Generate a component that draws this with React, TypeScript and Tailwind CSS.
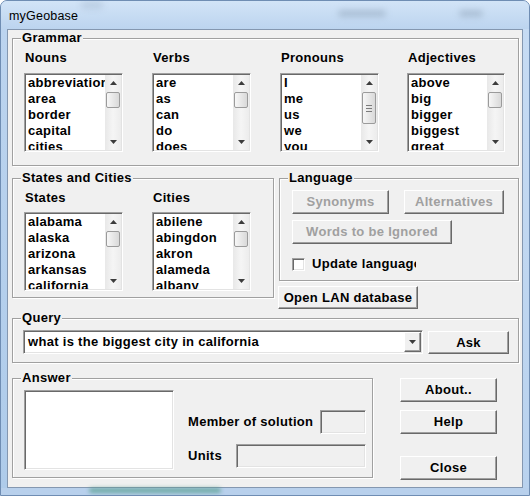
import type { ReactNode } from 'react';

const nouns = ['abbreviation', 'area', 'border', 'capital', 'cities'];
const verbs = ['are', 'as', 'can', 'do', 'does'];
const pronouns = ['I', 'me', 'us', 'we', 'you'];
const adjectives = ['above', 'big', 'bigger', 'biggest', 'great'];
const states = ['alabama', 'alaska', 'arizona', 'arkansas', 'california'];
const cities = ['abilene', 'abingdon', 'akron', 'alameda', 'albany'];

const raised =
  'border border-t-white border-l-white border-b-[#696969] border-r-[#696969] shadow-[inset_-1px_-1px_0_#a0a0a0] bg-[#f0f0f0]';
const sunken =
  'border border-t-[#a0a0a0] border-l-[#a0a0a0] border-b-white border-r-white shadow-[inset_1px_1px_0_#696969,inset_-1px_-1px_0_#e3e3e3] p-[1px]';

function Arrow({ down }: { down?: boolean }) {
  return (
    <svg width="7" height="4" viewBox="0 0 7 4">
      <polygon points={down ? '0,0 7,0 3.5,4' : '0,4 7,4 3.5,0'} fill="#3c3c3c" />
    </svg>
  );
}

function ScrollBar({ big }: { big?: boolean }) {
  return (
    <div className="flex h-full w-[16px] shrink-0 flex-col bg-linear-to-r from-[#e8e8e8] via-[#f5f5f5] to-[#ececec]">
      <div className="flex h-[16px] items-center justify-center">
        <Arrow />
      </div>
      <div className="flex-1 pt-[1px]">
        {big ? (
          <div className="mx-[1px] flex h-[32px] flex-col items-center justify-center gap-[2px] rounded-[2px] border border-[#9b9b9b] bg-linear-to-r from-[#f7f7f7] to-[#d9d9d9]">
            <div className="h-[1px] w-[6px] bg-[#7c7c7c]" />
            <div className="h-[1px] w-[6px] bg-[#7c7c7c]" />
            <div className="h-[1px] w-[6px] bg-[#7c7c7c]" />
          </div>
        ) : (
          <div className="mx-[1px] h-[16px] rounded-[2px] border border-[#9b9b9b] bg-linear-to-r from-[#f7f7f7] to-[#d9d9d9]" />
        )}
      </div>
      <div className="flex h-[16px] items-center justify-center">
        <Arrow down />
      </div>
    </div>
  );
}

function ListBox({ items, big, wide }: { items: string[]; big?: boolean; wide?: boolean }) {
  return (
    <div className={`${sunken} flex h-[79px] bg-white ${wide ? 'w-[99px]' : 'w-[98px]'}`}>
      <div className="flex-1 overflow-hidden whitespace-nowrap pl-[2px]">
        {items.map((it) => (
          <div key={it} className="h-[16px] leading-[16px]">
            {it}
          </div>
        ))}
      </div>
      <ScrollBar big={big} />
    </div>
  );
}

function Group({ title, className, children }: { title: string; className: string; children: ReactNode }) {
  return (
    <div className={`border border-[#a0a0a0] shadow-[1px_1px_0_#fff,inset_1px_1px_0_#fff] ${className}`}>
      <div className="-mt-[9px] ml-[8px] h-[16px] w-fit bg-[#f0f0f0] px-[1px] leading-[16px]">{title}</div>
      {children}
    </div>
  );
}

function Button({ label, className, disabled }: { label: string; className: string; disabled?: boolean }) {
  return (
    <div
      className={`${raised} flex items-center justify-center ${disabled ? 'text-[#a0a0a0]' : 'text-black'} ${className}`}
    >
      {label}
    </div>
  );
}

function Column({ label, children, className }: { label: string; children: ReactNode; className: string }) {
  return (
    <div className={`flex flex-col ${className}`}>
      <div className="h-[16px] pl-[1px] leading-[16px]">{label}</div>
      {children}
    </div>
  );
}

export default function App() {
  return (
    <div className="flex h-[496px] w-[530px] flex-col overflow-hidden rounded-t-[7px] border border-[#6f8db3] bg-[#bad2ee] font-['Liberation_Sans',Arial,sans-serif] text-[13px] font-bold tracking-[0.3px] text-black">
      {/* title bar */}
      <div className="relative flex h-[28px] shrink-0 items-center bg-linear-to-b from-[#d2e4f7] to-[#bcd4ef] pl-[8px] pt-[2px]">
        <span className="text-[12.5px] font-normal tracking-[0.2px]">myGeobase</span>
        <div className="absolute left-[80px] top-[0px] h-[8px] w-[22px] rounded-full bg-[#9fb3c9] opacity-40 blur-[3px]" />
        <div className="absolute left-[337px] top-[9px] h-[7px] w-[48px] rounded-full bg-[#8ea2b8] opacity-50 blur-[3px]" />
        <div className="absolute left-[458px] top-[9px] h-[7px] w-[24px] rounded-full bg-[#8ea2b8] opacity-50 blur-[3px]" />
      </div>

      <div className="flex">
        <div className="w-[6px] bg-linear-to-b from-[#bcd4ef] to-[#aecbea]" />
        {/* client area */}
        <div className="flex h-[459px] w-[516px] flex-col border border-[#8497b0] bg-[#f0f0f0] pl-[4px] pt-[8px]">
          <Group title="Grammar" className="h-[128px] w-[507px]">
            <div className="mt-[4px] grid grid-cols-[128px_128px_127px_auto] pl-[11px]">
              <Column label="Nouns" className="gap-[7px]">
                <ListBox items={nouns} wide />
              </Column>
              <Column label="Verbs" className="gap-[7px]">
                <ListBox items={verbs} wide />
              </Column>
              <Column label="Pronouns" className="gap-[7px]">
                <ListBox items={pronouns} big wide />
              </Column>
              <Column label="Adjectives" className="gap-[7px]">
                <ListBox items={adjectives} />
              </Column>
            </div>
          </Group>

          <div className="mt-[12px] flex h-[131px]">
            <Group title="States and Cities" className="h-[120px] w-[262px]">
              <div className="mt-[4px] grid grid-cols-[128px_auto] pl-[11px]">
                <Column label="States" className="gap-[6px]">
                  <ListBox items={states} wide />
                </Column>
                <Column label="Cities" className="gap-[6px]">
                  <ListBox items={cities} wide />
                </Column>
              </div>
            </Group>

            <div className="ml-[5px] flex flex-col">
              <Group title="Language" className="h-[103px] w-[240px]">
                <div className="mt-[4px] flex flex-col pl-[12px]">
                  <div className="flex gap-[15px]">
                    <Button label="Synonyms" disabled className="h-[24px] w-[97px]" />
                    <Button label="Alternatives" disabled className="h-[24px] w-[100px]" />
                  </div>
                  <Button label="Words to be Ignored" disabled className="mt-[6px] h-[24px] w-[160px]" />
                  <div className="mt-[12px] flex h-[16px] items-center">
                    <div className={`${sunken} h-[13px] w-[13px] bg-white`} />
                    <span className="ml-[7px] w-[104px] overflow-hidden whitespace-nowrap leading-[16px]">
                      Update language
                    </span>
                  </div>
                </div>
              </Group>
              <Button label="Open LAN database" className="-ml-[1px] mt-[5px] h-[23px] w-[140px]" />
            </div>
          </div>

          <Group title="Query" className="mt-[9px] h-[45px] w-[507px]">
            <div className="mt-[4px] flex items-start pl-[10px]">
              <div className={`${sunken} flex h-[24px] w-[400px] bg-white`}>
                <div className="flex-1 overflow-hidden whitespace-nowrap pl-[3px] leading-[20px]">
                  what is the biggest city in california
                </div>
                <div className={`${raised} flex h-[20px] w-[17px] items-center justify-center`}>
                  <Arrow down />
                </div>
              </div>
              <Button label="Ask" className="ml-[5px] mt-[1px] h-[23px] w-[81px]" />
            </div>
          </Group>

          <div className="mt-[15px] flex">
            <Group title="Answer" className="h-[100px] w-[361px]">
              <div className="mt-[4px] flex pl-[11px]">
                <div className={`${sunken} h-[80px] w-[150px] bg-white`} />
                <div className="ml-[14px] flex w-[178px] flex-col">
                  <div className="mt-[20px] flex h-[24px] items-center justify-between">
                    <span>Member of solution</span>
                    <div className={`${sunken} h-[24px] w-[46px] bg-[#f0f0f0]`} />
                  </div>
                  <div className="mt-[10px] flex h-[24px] items-center justify-between">
                    <span>Units</span>
                    <div className={`${sunken} h-[24px] w-[130px] bg-[#f0f0f0]`} />
                  </div>
                </div>
              </div>
            </Group>
            <div className="ml-[27px] flex w-[97px] flex-col">
              <Button label="About.." className="h-[24px] w-[97px]" />
              <Button label="Help" className="mt-[8px] h-[24px] w-[97px]" />
              <Button label="Close" className="mt-[22px] h-[24px] w-[97px]" />
            </div>
          </div>
        </div>
        <div className="w-[6px] bg-linear-to-b from-[#c6dbf3] to-[#b9d2ee]" />
      </div>

      {/* bottom frame */}
      <div className="relative flex-1 bg-[#b8d0ec]">
        <div className="absolute left-[88px] top-[0px] h-[5px] w-[132px] rounded-full bg-[#4f9a86] opacity-70 blur-[2px]" />
      </div>
    </div>
  );
}
